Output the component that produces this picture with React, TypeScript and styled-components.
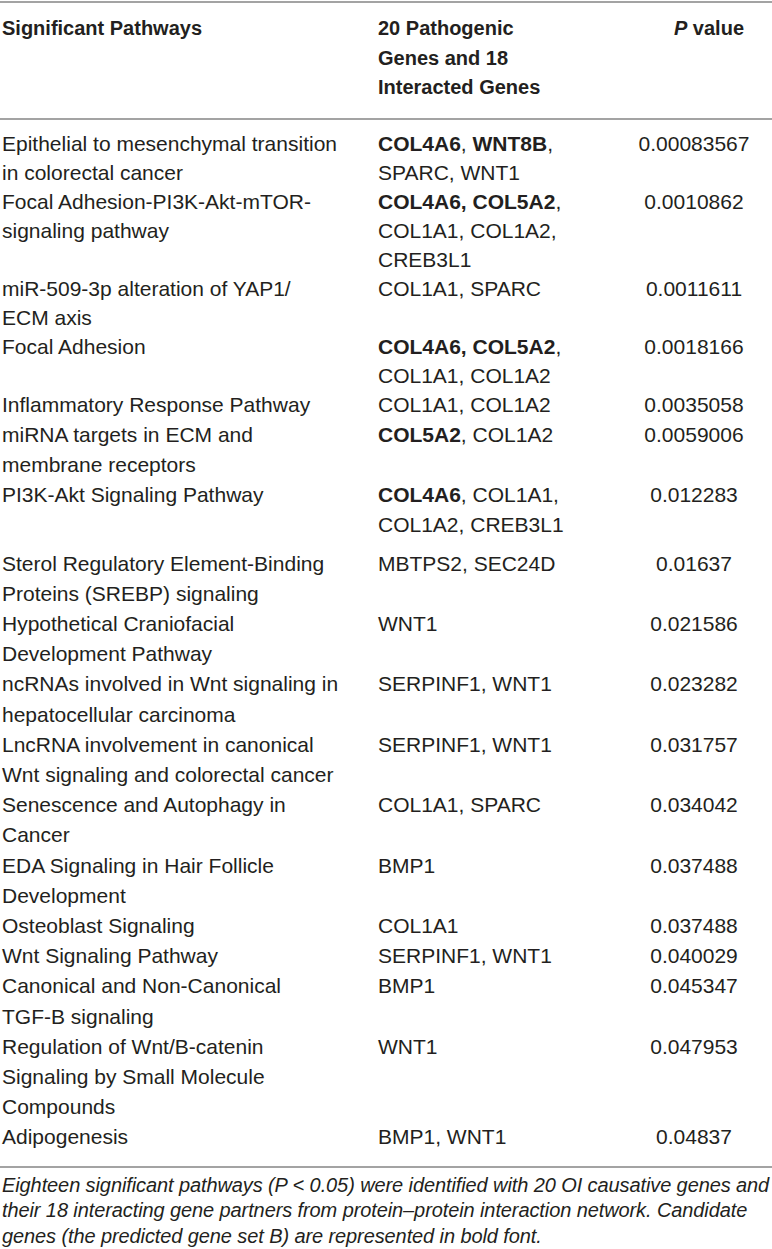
import * as React from 'react';
import styled, { createGlobalStyle } from 'styled-components';

const GlobalStyle = createGlobalStyle`
  html, body {
    margin: 0;
    padding: 0;
    background: #ffffff;
  }
  body {
    font-family: "Liberation Sans", Arial, sans-serif;
    color: #231f20;
  }
`;

const Page = styled.div`
  width: 772px;
  background: #ffffff;
`;

const Table = styled.div`
  border-top: 2px solid #a3a3a3;
  margin-top: 1px;
`;

const HeaderRow = styled.div`
  display: grid;
  grid-template-columns: 376px 244px 1fr;
  padding: 11px 0 15px;
  border-bottom: 2px solid #a3a3a3;
  font-size: 20px;
  line-height: 29.5px;
  font-weight: 700;
  color: #231f20;
`;

const Body = styled.div`
  padding: 9px 0 13px;
  border-bottom: 2px solid #a3a3a3;
`;

const Row = styled.div<{ $dense?: boolean; $gapAfter?: number }>`
  display: grid;
  grid-template-columns: 376px 244px 1fr;
  font-size: 21px;
  line-height: ${(p) => (p.$dense ? '29px' : '30.2px')};
  font-weight: 400;
  margin-bottom: ${(p) => p.$gapAfter ?? 0}px;
`;

const Cell = styled.div`
  padding-left: 2px;
`;

const GeneCell = styled.div`
  padding-left: 2px;
`;

const PCell = styled.div<{ $head?: boolean }>`
  text-align: center;
  padding-left: ${(p) => (p.$head ? 30 : 0)}px;
  padding-right: 4px;
`;

const Strong = styled.b`
  font-weight: 700;
`;

const Em = styled.i`
  font-style: italic;
`;

const Note = styled.p`
  margin: 0;
  padding: 5px 0 0 2px;
  font-size: 20px;
  line-height: 25.5px;
  font-style: italic;
  letter-spacing: -0.1px;
  color: #231f20;
`;

type Gene = string | { b: string };

type PathRow = {
  name: string[];
  genes: Gene[][];
  p: string;
  dense?: boolean;
  gap?: number;
};

const rows: PathRow[] = [
  {
    name: ['Epithelial to mesenchymal transition', 'in colorectal cancer'],
    genes: [[{ b: 'COL4A6' }, ', ', { b: 'WNT8B' }, ','], ['SPARC, WNT1']],
    p: '0.00083567',
    dense: true,
  },
  {
    name: ['Focal Adhesion-PI3K-Akt-mTOR-', 'signaling pathway'],
    genes: [[{ b: 'COL4A6, COL5A2' }, ','], ['COL1A1, COL1A2,'], ['CREB3L1']],
    p: '0.0010862',
    dense: true,
  },
  {
    name: ['miR-509-3p alteration of YAP1/', 'ECM axis'],
    genes: [['COL1A1, SPARC']],
    p: '0.0011611',
    dense: true,
  },
  {
    name: ['Focal Adhesion'],
    genes: [[{ b: 'COL4A6, COL5A2' }, ','], ['COL1A1, COL1A2']],
    p: '0.0018166',
    dense: true,
  },
  {
    name: ['Inflammatory Response Pathway'],
    genes: [['COL1A1, COL1A2']],
    p: '0.0035058',
  },
  {
    name: ['miRNA targets in ECM and', 'membrane receptors'],
    genes: [[{ b: 'COL5A2' }, ', COL1A2']],
    p: '0.0059006',
  },
  {
    name: ['PI3K-Akt Signaling Pathway'],
    genes: [[{ b: 'COL4A6' }, ', COL1A1,'], ['COL1A2, CREB3L1']],
    p: '0.012283',
    gap: 8,
  },
  {
    name: ['Sterol Regulatory Element-Binding', 'Proteins (SREBP) signaling'],
    genes: [['MBTPS2, SEC24D']],
    p: '0.01637',
  },
  {
    name: ['Hypothetical Craniofacial', 'Development Pathway'],
    genes: [['WNT1']],
    p: '0.021586',
  },
  {
    name: ['ncRNAs involved in Wnt signaling in', 'hepatocellular carcinoma'],
    genes: [['SERPINF1, WNT1']],
    p: '0.023282',
  },
  {
    name: ['LncRNA involvement in canonical', 'Wnt signaling and colorectal cancer'],
    genes: [['SERPINF1, WNT1']],
    p: '0.031757',
  },
  {
    name: ['Senescence and Autophagy in', 'Cancer'],
    genes: [['COL1A1, SPARC']],
    p: '0.034042',
  },
  {
    name: ['EDA Signaling in Hair Follicle', 'Development'],
    genes: [['BMP1']],
    p: '0.037488',
  },
  {
    name: ['Osteoblast Signaling'],
    genes: [['COL1A1']],
    p: '0.037488',
  },
  {
    name: ['Wnt Signaling Pathway'],
    genes: [['SERPINF1, WNT1']],
    p: '0.040029',
  },
  {
    name: ['Canonical and Non-Canonical', 'TGF-B signaling'],
    genes: [['BMP1']],
    p: '0.045347',
  },
  {
    name: ['Regulation of Wnt/B-catenin', 'Signaling by Small Molecule', 'Compounds'],
    genes: [['WNT1']],
    p: '0.047953',
  },
  {
    name: ['Adipogenesis'],
    genes: [['BMP1, WNT1']],
    p: '0.04837',
  },
];

const Lines = ({ lines }: { lines: React.ReactNode[] }) => (
  <>
    {lines.map((l, i) => (
      <React.Fragment key={i}>
        {i > 0 && <br />}
        {l}
      </React.Fragment>
    ))}
  </>
);

const renderGenes = (genes: Gene[][]) =>
  genes.map((line, i) => (
    <React.Fragment key={i}>
      {line.map((g, j) =>
        typeof g === 'string' ? <React.Fragment key={j}>{g}</React.Fragment> : <Strong key={j}>{g.b}</Strong>
      )}
    </React.Fragment>
  ));

const App = () => (
  <Page>
    <GlobalStyle />
    <Table>
      <HeaderRow>
        <Cell>Significant Pathways</Cell>
        <GeneCell>
          <Lines lines={['20 Pathogenic', 'Genes and 18', 'Interacted Genes']} />
        </GeneCell>
        <PCell $head>
          <Em>P</Em> value
        </PCell>
      </HeaderRow>
      <Body>
        {rows.map((r) => (
          <Row key={r.name.join(' ')} $dense={r.dense} $gapAfter={r.gap}>
            <Cell>
              <Lines lines={r.name} />
            </Cell>
            <GeneCell>
              <Lines lines={renderGenes(r.genes)} />
            </GeneCell>
            <PCell>{r.p}</PCell>
          </Row>
        ))}
      </Body>
    </Table>
    <Note>
      Eighteen significant pathways (P &lt; 0.05) were identified with 20 OI causative genes and
      <br />
      their 18 interacting gene partners from protein–protein interaction network. Candidate
      <br />
      genes (the predicted gene set B) are represented in bold font.
    </Note>
  </Page>
);

export default App;
